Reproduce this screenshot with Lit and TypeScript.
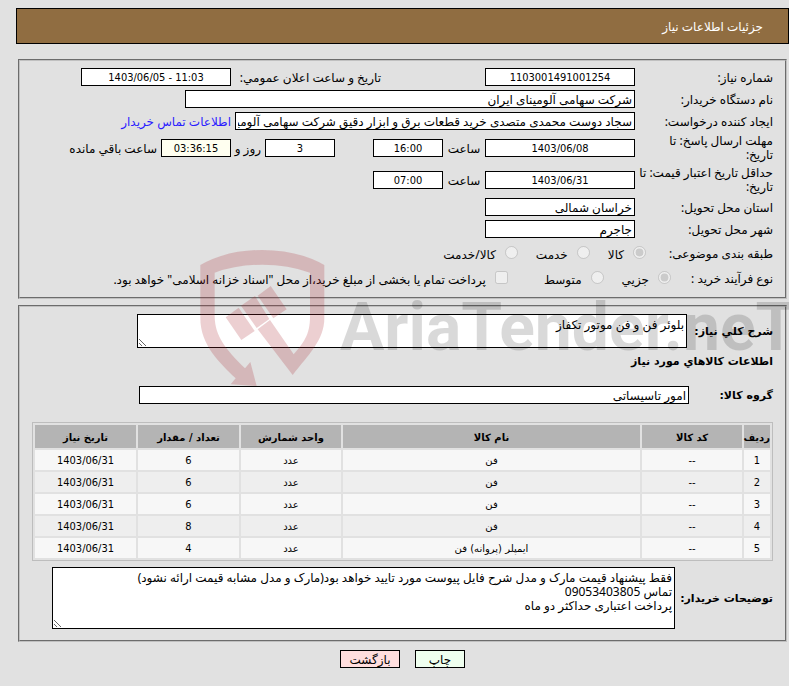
import { LitElement, html, css } from "lit";
import { customElement } from "lit/decorators.js";

interface Item {
  code: string;
  name: string;
  unit: string;
  count: string;
  date: string;
}

const items: Item[] = [
  { code: "--", name: "فن", unit: "عدد", count: "6", date: "1403/06/31" },
  { code: "--", name: "فن", unit: "عدد", count: "6", date: "1403/06/31" },
  { code: "--", name: "فن", unit: "عدد", count: "6", date: "1403/06/31" },
  { code: "--", name: "فن", unit: "عدد", count: "8", date: "1403/06/31" },
  { code: "--", name: "ایمپلر (پروانه) فن", unit: "عدد", count: "4", date: "1403/06/31" },
];

const notes = `فقط پیشنهاد قیمت مارک و مدل شرح فایل پیوست مورد تایید خواهد بود(مارک و مدل مشابه قیمت ارائه نشود)
تماس 09053403805
پرداخت اعتباری حداکثر دو ماه`;

@customElement("app-root")
export class AppRoot extends LitElement {
  static styles = css`
    :host {
      display: block;
      position: relative;
      overflow: hidden;
      box-sizing: border-box;
      min-height: 100vh;
      padding: 8px 0 17px 16px;
      background: #e1e1e1;
      color: #000;
      font-family: "Noto Sans", "DejaVu Sans", sans-serif;
      font-size: 12px;
      line-height: 14px;
    }
    * {
      box-sizing: border-box;
    }
    .title {
      display: flex;
      align-items: center;
      height: 36px;
      margin: 0;
      padding: 2px 25px 0;
      border: 1px solid #000;
      background: #906d41;
      color: #fff;
      font-size: 12px;
      font-weight: 400;
    }
    .panel {
      margin: 0 2px;
      padding: 5px 12px 7px;
      border: 2px groove #c0c0c0;
      min-width: 0;
    }
    .summary {
      margin-top: 15px;
    }
    .details {
      margin-top: 6px;
      padding: 7px 12px 11px;
    }
    .row {
      display: flex;
      align-items: center;
      min-height: 22px;
    }
    .double {
      min-height: 32px;
    }
    .label {
      flex: none;
      width: 138px;
      white-space: nowrap;
    }
    .second {
      margin-right: 104px;
      width: 150px;
    }
    .hour {
      flex: none;
      width: 42px;
      text-align: center;
    }
    .day {
      flex: none;
      width: 34px;
      padding-right: 4px;
    }
    .after {
      margin-right: 4px;
    }
    .label,
    .hour,
    .day,
    .after,
    .link {
      padding-top: 2px;
    }
    .double .label {
      padding-top: 0;
    }
    .box {
      flex: none;
      height: 18px;
      margin: 0;
      padding: 1px 2px 0;
      border: 1px solid #000;
      border-radius: 0;
      background: #fff;
      color: #000;
      font: inherit;
    }
    .box.num {
      padding-top: 0;
      font-family: "DejaVu Sans Condensed", "DejaVu Sans", sans-serif;
      font-size: 11px;
      text-align: center;
    }
    .w70 { width: 70px; }
    .w150 { width: 150px; }
    .w400 { width: 400px; }
    .w450 { width: 450px; }
    .w550 { width: 550px; }
    .apart {
      margin-right: 38px;
    }
    .timer {
      background: #fffff0;
    }
    .link {
      margin-right: 4px;
      color: #2a1cff;
      text-decoration: none;
    }
    .choices {
      min-height: 25px;
    }
    .choices .label {
      width: 127px;
    }
    .choices .process {
      width: 102px;
    }
    .choice {
      display: flex;
      align-items: center;
      gap: 9px;
      margin-left: 18px;
      white-space: nowrap;
    }
    .payment {
      margin: 0 18px 0 0;
    }
    .choice input {
      flex: none;
      width: 13px;
      height: 13px;
      margin: 0;
    }
    .choice span {
      padding-top: 4px;
    }
    .strong {
      font-family: "DejaVu Sans", sans-serif;
      font-size: 11px;
      font-weight: 700;
    }
    .area {
      display: block;
      margin: 0;
      padding: 3px 2px;
      border: 1px solid #000;
      border-radius: 0;
      background: #fff;
      color: #000;
      font: inherit;
      overflow: hidden;
    }
    .short {
      width: 550px;
      height: 34px;
    }
    .long {
      width: 623px;
      height: 62px;
    }
    .need .label {
      width: 86px;
    }
    .heading {
      margin: 7px 0 0;
      font-family: "DejaVu Sans", sans-serif;
      font-size: 11px;
      font-weight: 700;
    }
    .group {
      margin-top: 15px;
    }
    .group .label {
      width: 84px;
    }
    .items {
      width: 100%;
      margin: 16px 0 6px;
      border: 1px solid #bdbdbd;
      border-collapse: separate;
      border-spacing: 2px;
      table-layout: fixed;
      text-align: center;
      font-family: "DejaVu Sans", sans-serif;
      font-size: 10px;
    }
    .items th {
      height: 23px;
      padding: 2px 0 0;
      background: #b4b4b4;
      white-space: nowrap;
    }
    .items td {
      height: 20px;
      padding: 2px 0 0;
      background: #f7f7f7;
    }
    .items .num {
      font-family: "DejaVu Sans Condensed", "DejaVu Sans", sans-serif;
      font-size: 11px;
    }
    .items tr:nth-child(even) td {
      background: #eee;
    }
    .index { width: 26px; }
    .code { width: 100px; }
    .unit { width: 100px; }
    .date { width: 101px; }
    .notes .label {
      width: 98px;
    }
    .actions {
      display: flex;
      justify-content: center;
      gap: 15px;
      margin-top: 8px;
    }
    .button {
      height: 18px;
      padding: 2px 0 0;
      border: 1px solid #000;
      border-radius: 0;
      font: inherit;
      color: #000;
    }
    .print {
      width: 50px;
      background: #efffef;
    }
    .back {
      width: 60px;
      background: #ffdede;
    }
    .watermark {
      position: absolute;
      top: 240px;
      left: 190px;
      display: flex;
      direction: ltr;
      pointer-events: none;
    }
    .shield {
      display: block;
      width: 150px;
      height: 150px;
      flex: none;
      fill: rgba(170, 38, 46, 0.22);
    }
    .brand {
      padding-top: 40px;
      color: rgba(0, 0, 0, 0.15);
      font-family: Roboto, "Liberation Sans", sans-serif;
      font-size: 66px;
      font-weight: 700;
      line-height: 96px;
      white-space: nowrap;
    }
  `;

  render() {
    return html`
      <main dir="rtl">
        <h1 class="title">جزئیات اطلاعات نیاز</h1>

        <fieldset class="panel summary">
          <div class="row">
            <label class="label" for="number">شماره نیاز:</label>
            <input class="box num w150" id="number" readonly value="1103001491001254" />
            <label class="label second" for="announced">تاریخ و ساعت اعلان عمومي:</label>
            <input class="box num w150" id="announced" dir="ltr" readonly value="1403/06/05 - 11:03" />
          </div>
          <div class="row">
            <label class="label" for="buyer">نام دستگاه خریدار:</label>
            <input class="box w450" id="buyer" readonly value="شرکت سهامی آلومینای ایران" />
          </div>
          <div class="row">
            <label class="label" for="creator">ایجاد کننده درخواست:</label>
            <input class="box w400" id="creator" readonly
              value="سجاد دوست محمدی متصدی خرید قطعات برق و ابزار دقیق شرکت سهامی آلومینای ایران" />
            <a class="link" href="#contact">اطلاعات تماس خریدار</a>
          </div>
          <div class="row double">
            <label class="label" for="deadline">مهلت ارسال پاسخ: تا<br />تاریخ:</label>
            <input class="box num w150" id="deadline" readonly value="1403/06/08" />
            <label class="hour" for="deadline-hour">ساعت</label>
            <input class="box num w70" id="deadline-hour" readonly value="16:00" />
            <input class="box num w70 apart" id="days" readonly value="3" />
            <label class="day" for="days">روز و</label>
            <input class="box num w70 timer" id="left" readonly value="03:36:15" />
            <label class="after" for="left">ساعت باقي مانده</label>
          </div>
          <div class="row double">
            <label class="label" for="validity">حداقل تاریخ اعتبار قیمت: تا<br />تاریخ:</label>
            <input class="box num w150" id="validity" readonly value="1403/06/31" />
            <label class="hour" for="validity-hour">ساعت</label>
            <input class="box num w70" id="validity-hour" readonly value="07:00" />
          </div>
          <div class="row">
            <label class="label" for="province">استان محل تحویل:</label>
            <input class="box w150" id="province" readonly value="خراسان شمالی" />
          </div>
          <div class="row">
            <label class="label" for="city">شهر محل تحویل:</label>
            <input class="box w150" id="city" readonly value="جاجرم" />
          </div>
          <div class="row choices">
            <span class="label">طبقه بندی موضوعی:</span>
            <label class="choice"><input type="radio" name="subject" checked disabled /><span>کالا</span></label>
            <label class="choice"><input type="radio" name="subject" disabled /><span>خدمت</span></label>
            <label class="choice"><input type="radio" name="subject" disabled /><span>کالا/خدمت</span></label>
          </div>
          <div class="row choices">
            <span class="label process">نوع فرآیند خرید :</span>
            <label class="choice"><input type="radio" name="process" checked disabled /><span>جزیي</span></label>
            <label class="choice"><input type="radio" name="process" disabled /><span>متوسط</span></label>
            <label class="choice payment"><input type="checkbox" disabled /><span>پرداخت تمام یا بخشی از مبلغ خرید،از محل "اسناد خزانه اسلامی" خواهد بود.</span></label>
          </div>
        </fieldset>

        <fieldset class="panel details">
          <div class="row need">
            <label class="label strong" for="need">شرح کلي نیاز:</label>
            <textarea class="area short" id="need" readonly .value=${"بلوئر فن و فن موتور تکفاز"}></textarea>
          </div>
          <h2 class="heading">اطلاعات کالاهاي مورد نیاز</h2>
          <div class="row group">
            <label class="label strong" for="group">گروه کالا:</label>
            <input class="box w550" id="group" readonly value="امور تاسیساتی" />
          </div>
          <table class="items">
            <thead>
              <tr>
                <th class="index">ردیف</th>
                <th class="code">کد کالا</th>
                <th>نام کالا</th>
                <th class="unit">واحد شمارش</th>
                <th class="date">تعداد / مقدار</th>
                <th class="date">تاریخ نیاز</th>
              </tr>
            </thead>
            <tbody>
              ${items.map(
                (item, i) => html`<tr>
                  <td class="num">${i + 1}</td>
                  <td class="num">${item.code}</td>
                  <td>${item.name}</td>
                  <td>${item.unit}</td>
                  <td class="num">${item.count}</td>
                  <td class="num">${item.date}</td>
                </tr>`
              )}
            </tbody>
          </table>
          <div class="row notes">
            <label class="label strong" for="notes">توضیحات خریدار:</label>
            <textarea class="area long" id="notes" readonly .value=${notes}></textarea>
          </div>
        </fieldset>

        <div class="actions">
          <button class="button print" type="button">چاپ</button>
          <button class="button back" type="button">بازگشت</button>
        </div>
      </main>

      <div class="watermark" aria-hidden="true">
        <svg class="shield" viewBox="0 0 450 450">
          <path
            d="M31 75Q110 30 217 30T403 75V235C403 300 355 345 308 405L203 268L240 240L311 343C340 308 360 285 360 230V98Q295 74 217 74T74 98V230C76 290 105 325 165 385L181 366L200 438L122 433L137 415C90 370 31 315 31 235Z"
          />
          <path d="M107 232L146 203L194 273L154 300Z" />
          <path d="M153 197L195 168L238 237L200 264Z" />
          <path d="M203 167L242 138L290 208L250 235Z" />
        </svg>
        <span class="brand">AriaTender.neT</span>
      </div>
    `;
  }
}
